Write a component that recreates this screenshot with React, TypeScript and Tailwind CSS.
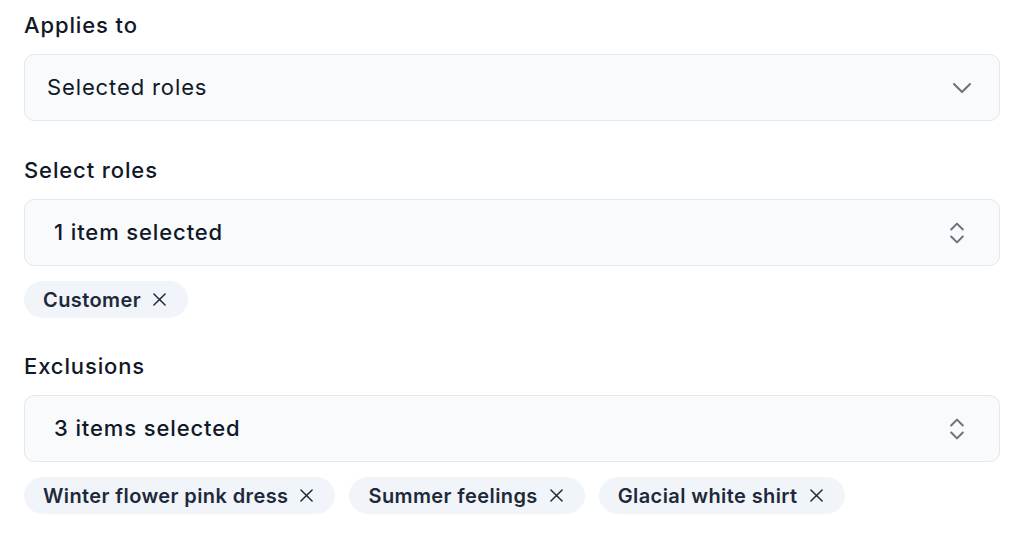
import React from "react";

function ChevronDown() {
  return (
    <svg width="32" height="32" viewBox="0 0 24 24" fill="none" stroke="#6b7280" strokeWidth="1.5" strokeLinecap="round" strokeLinejoin="round">
      <path d="m6 9 6 6 6-6" />
    </svg>
  );
}

function ChevronsUpDown() {
  return (
    <svg width="28" height="28" viewBox="0 0 24 24" fill="none" stroke="#6b7280" strokeWidth="1.7" strokeLinecap="round" strokeLinejoin="round">
      <path d="m7 15 5 5 5-5" />
      <path d="m7 9 5-5 5 5" />
    </svg>
  );
}

function XIcon() {
  return (
    <svg width="13" height="13" viewBox="5 5 14 14" fill="none" stroke="#1e293b" strokeWidth="1.6" strokeLinecap="round" strokeLinejoin="round">
      <path d="M18 6 6 18" />
      <path d="m6 6 12 12" />
    </svg>
  );
}

function Tag({ label }: { label: string }) {
  return (
    <div className="flex h-[37px] items-center gap-[12px] rounded-full bg-[#f1f5f9] pl-[19px] pr-[22px] text-[20px] font-semibold tracking-[0.02em] text-[#1e293b]">
      <span>{label}</span>
      <XIcon />
    </div>
  );
}

export default function App() {
  return (
    <div className="min-h-[534px] bg-white px-[24px] pt-[10px] text-[#111827]" style={{ fontFamily: "Inter, 'Noto Sans', sans-serif" }}>
      <div className="w-[976px]">
        <div className="text-[22px] font-medium leading-[30px] tracking-[0.04em]">Applies to</div>
        <div className="mt-[14px] flex h-[67px] items-center justify-between rounded-[10px] border border-[#e2e8f0] bg-[#f8fafc] pl-[22px] pr-[21px] text-[22px] tracking-[0.04em]">
          <span>Selected roles</span>
          <ChevronDown />
        </div>

        <div className="mt-[34px] text-[22px] font-medium leading-[30px] tracking-[0.04em]">Select roles</div>
        <div className="mt-[14px] flex h-[67px] items-center justify-between rounded-[10px] border border-[#e2e8f0] bg-[#f8fafc] pl-[29px] pr-[28px] text-[22px] font-medium tracking-[0.04em]">
          <span>1 item selected</span>
          <ChevronsUpDown />
        </div>
        <div className="mt-[15px] flex gap-[14px]">
          <Tag label="Customer" />
        </div>

        <div className="mt-[33px] text-[22px] font-medium leading-[30px] tracking-[0.04em]">Exclusions</div>
        <div className="mt-[14px] flex h-[67px] items-center justify-between rounded-[10px] border border-[#e2e8f0] bg-[#f8fafc] pl-[29px] pr-[28px] text-[22px] font-medium tracking-[0.04em]">
          <span>3 items selected</span>
          <ChevronsUpDown />
        </div>
        <div className="mt-[15px] flex gap-[14px]">
          <Tag label="Winter flower pink dress" />
          <Tag label="Summer feelings" />
          <Tag label="Glacial white shirt" />
        </div>
      </div>
    </div>
  );
}
